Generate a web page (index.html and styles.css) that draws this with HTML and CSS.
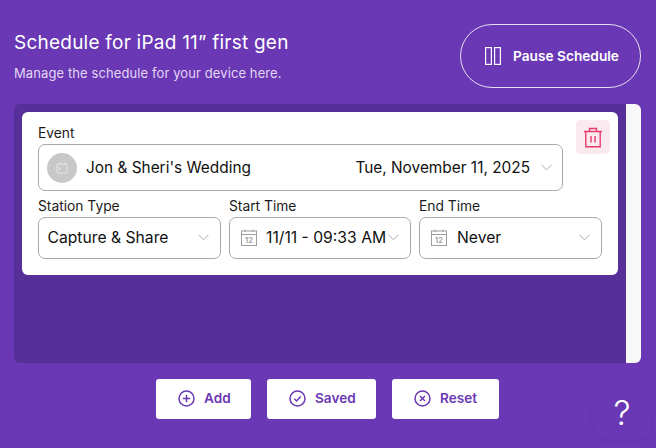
FILE: index.html
```html
<!DOCTYPE html>
<html lang="en">

<head>
    <meta charset="UTF-8">
    <meta name="viewport" content="width=device-width, initial-scale=1.0">
    <title>Schedule</title>
    <link rel="stylesheet" href="styles.css">
</head>

<body>
    <div class="page">
        <header class="header">
            <div>
                <h1>Schedule for iPad 11” first gen</h1>
                <p>Manage the schedule for your device here.</p>
            </div>
            <button type="button" class="pause">
                <svg width="16" height="18" viewBox="0 0 16 18" fill="none" stroke="#fff" stroke-width="1.2">
                    <rect x=".6" y=".6" width="5.800" height="16.800" />
                    <rect x="9.600" y=".6" width="5.800" height="16.800" />
                </svg>
                Pause Schedule
            </button>
        </header>

        <div class="panel">
            <div class="panel-list">
                <div class="card">
                    <button type="button" class="trash" aria-label="Delete">
                        <svg width="20" height="21" viewBox="0 0 20 21" fill="none" stroke="#e8396b" stroke-width="1.4">
                            <path d="M1 4.500h18M2.800 4.500v15.300h14.400V4.500M6.500 4.500V1.500h7v3M8 9v6.500M12 9v6.500" />
                        </svg>
                    </button>

                    <label class="label">Event</label>
                    <div class="select select-event">
                        <span class="avatar">
                            <svg width="12" height="12" viewBox="0 0 12 12" fill="none" stroke="#e6e6e6" stroke-width="1">
                                <rect x="1" y="2" width="10" height="9" rx="1" />
                                <path d="M3.5 .5v2M8.500 .5v2" />
                                <rect x="3" y="5.500" width="2" height="2" fill="#e6e6e6" stroke="none" />
                            </svg>
                        </span>
                        <span class="value">Jon &amp; Sheri's Wedding</span>
                        <span class="date">Tue, November 11, 2025</span>
                        <svg class="chevron" width="11" height="7" viewBox="0 0 12 7" fill="none" stroke="#a3a3a3">
                            <path d="M.5 .5 6 6l5.500-5.500" />
                        </svg>
                    </div>

                    <div class="row">
                        <div>
                            <label class="label">Station Type</label>
                            <div class="select">
                                <span class="value">Capture &amp; Share</span>
                                <svg class="chevron" width="11" height="7" viewBox="0 0 12 7" fill="none" stroke="#a3a3a3">
                                    <path d="M.5 .5 6 6l5.500-5.500" />
                                </svg>
                            </div>
                        </div>
                        <div>
                            <label class="label">Start Time</label>
                            <div class="select select-time">
                                <svg class="cal" width="16" height="17" viewBox="0 0 16 17" fill="none" stroke="#9c9c9c">
                                    <rect x=".5" y="2" width="15" height="14.500" />
                                    <path d="M.5 5.500h15M4 .5V3M12 .5V3" />
                                    <text x="8" y="14" font-size="7.500" font-weight="600" text-anchor="middle" fill="#9c9c9c" stroke="none">12</text>
                                </svg>
                                <span class="value">11/11 - 09:33 AM</span>
                                <svg class="chevron" width="11" height="7" viewBox="0 0 12 7" fill="none" stroke="#a3a3a3">
                                    <path d="M.5 .5 6 6l5.500-5.500" />
                                </svg>
                            </div>
                        </div>
                        <div>
                            <label class="label">End Time</label>
                            <div class="select select-end">
                                <svg class="cal" width="16" height="17" viewBox="0 0 16 17" fill="none" stroke="#9c9c9c">
                                    <rect x=".5" y="2" width="15" height="14.500" />
                                    <path d="M.5 5.500h15M4 .5V3M12 .5V3" />
                                    <text x="8" y="14" font-size="7.500" font-weight="600" text-anchor="middle" fill="#9c9c9c" stroke="none">12</text>
                                </svg>
                                <span class="value">Never</span>
                                <svg class="chevron" width="11" height="7" viewBox="0 0 12 7" fill="none" stroke="#a3a3a3">
                                    <path d="M.5 .5 6 6l5.500-5.500" />
                                </svg>
                            </div>
                        </div>
                    </div>
                </div>
            </div>
            <div class="scrollbar"></div>
        </div>

        <div class="actions">
            <button type="button" class="action action-add">
                <svg width="17" height="17" viewBox="0 0 17 17" fill="none" stroke="#6a38b4" stroke-width="1.500">
                    <circle cx="8.500" cy="8.500" r="7.500" />
                    <path d="M8.500 4.800v7.400M4.800 8.500h7.400" />
                </svg>
                Add
            </button>
            <button type="button" class="action action-saved">
                <svg width="17" height="17" viewBox="0 0 17 17" fill="none" stroke="#6a38b4" stroke-width="1.500">
                    <circle cx="8.500" cy="8.500" r="7.500" />
                    <path d="M5.300 8.800l2.300 2.200 4.100-4.400" />
                </svg>
                Saved
            </button>
            <button type="button" class="action action-reset">
                <svg width="17" height="17" viewBox="0 0 17 17" fill="none" stroke="#6a38b4" stroke-width="1.500">
                    <circle cx="8.500" cy="8.500" r="7.500" />
                    <path d="M6 6l5 5M11 6l-5 5" />
                </svg>
                Reset
            </button>
        </div>
    </div>

    <button type="button" class="help">?</button>
</body>

</html>
```

FILE: styles.css
```css
* {
    box-sizing: border-box;
}

body {
    margin: 0;
    width: 656px;
    height: 448px;
    overflow: hidden;
    position: relative;
    font-family: Inter, sans-serif;
    background-color: #6a38b4;
}

button {
    font-family: inherit;
    cursor: pointer;
}

.page {
    padding: 24px 15px 0 14px;
}

.header {
    display: flex;
    justify-content: space-between;
    align-items: flex-start;
    height: 80px;
}

.header h1 {
    margin: 8px 0 0;
    font-size: 19px;
    line-height: 22px;
    font-weight: 400;
    color: #fff;
    letter-spacing: 0.23px;
}

.header p {
    margin: 11px 0 0;
    font-size: 13px;
    line-height: 16px;
    letter-spacing: 0.1px;
    color: #e2d7f3;
}

.pause {
    display: flex;
    align-items: center;
    gap: 12px;
    width: 181px;
    height: 64px;
    padding: 0 0 0 24px;
    background: none;
    border: 1px solid #e6dff2;
    border-radius: 32px;
    color: #fff;
    font-size: 13.7px;
    font-weight: 600;
}

.panel {
    display: flex;
    height: 259px;
    border-radius: 6px;
    overflow: hidden;
}

.panel-list {
    flex: 1;
    padding: 8px;
    background-color: #572f98;
}

.scrollbar {
    width: 15px;
    background-color: #f8f8f8;
}

.card {
    position: relative;
    height: 163px;
    padding: 13px 16px 0;
    background-color: #fff;
    border-radius: 6px;
}

.trash {
    position: absolute;
    top: 8px;
    right: 8px;
    display: flex;
    align-items: center;
    justify-content: center;
    width: 34px;
    height: 34px;
    padding: 0;
    border: none;
    border-radius: 5px;
    background-color: #fbe9f0;
}

.label {
    display: block;
    height: 19px;
    font-size: 13.8px;
    line-height: 16px;
    color: #1a1a1a;
}

.select {
    display: flex;
    align-items: center;
    height: 42px;
    padding: 0 11px 2px 8.500px;
    border: 1px solid #a8a8a8;
    border-radius: 7px;
    font-size: 15.7px;
    color: #111;
    white-space: nowrap;
}

.select .chevron {
    flex: none;
    margin-left: auto;
}

.select-event {
    width: 525px;
    height: 47px;
    padding: 0 10px 0 8px;
    font-size: 15.4px;
}

.avatar {
    display: flex;
    align-items: center;
    justify-content: center;
    flex: none;
    width: 30px;
    height: 30px;
    margin-right: 9px;
    border-radius: 50%;
    background-color: #c8c8c8;
}

.date {
    margin-left: auto;
    margin-right: 11px;
}

.select-event .chevron {
    margin-left: 0;
}

.row {
    display: grid;
    grid-template-columns: 183px 182px 183px;
    gap: 8px;
    margin-top: 7px;
}

.cal {
    flex: none;
    margin-right: 9px;
}

.select-time,
.select-end {
    padding-left: 11px;
}

.select-time .value {
    flex: none;
}

.select-end .cal {
    margin-right: 10px;
}

.actions {
    display: flex;
    justify-content: center;
    gap: 16px;
    margin-top: 16px;
}

.action {
    display: flex;
    align-items: center;
    height: 40px;
    padding: 0 0 2px 22px;
    gap: 9px;
    background-color: #fff;
    border: none;
    border-radius: 3px;
    color: #6a38b4;
    font-size: 13.6px;
    font-weight: 600;
}

.action-add {
    width: 95px;
}

.action-saved {
    width: 109px;
}

.action-reset {
    width: 107px;
}

.help {
    position: absolute;
    top: 392px;
    left: 592px;
    width: 60px;
    height: 48px;
    padding: 0 0 10px;
    border: none;
    border-radius: 18px;
    background-color: #6a38b4;
    box-shadow: 0 1px 3px rgba(60, 30, 110, 0.15);
    color: #fff;
    font-size: 34px;
    font-weight: 300;
}
```
